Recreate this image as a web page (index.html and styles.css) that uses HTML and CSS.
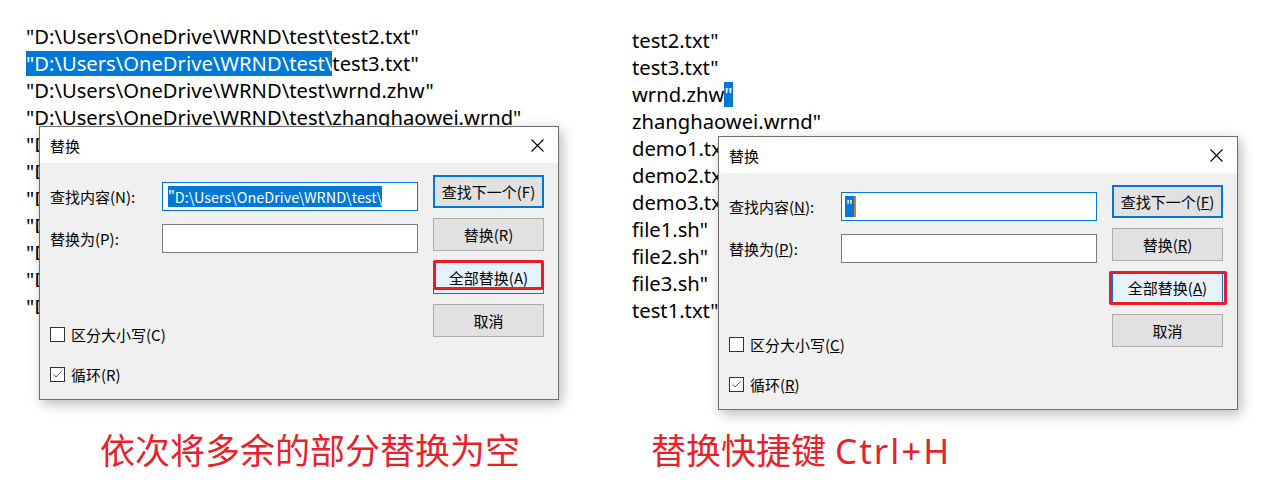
FILE: index.html
```html
<!DOCTYPE html>
<html lang="zh-CN">
<head>
<meta charset="utf-8">
<title>替换</title>
<link rel="stylesheet" href="styles.css">
</head>
<body>
<div class="page">
  <div class="shots">
    <section class="shot shot-a">
      <div class="lines">
        <div class="line">"D:\Users\OneDrive\WRND\test\test2.txt"</div>
        <div class="line"><span class="sel">"D:\Users\OneDrive\WRND\test\</span>test3.txt"</div>
        <div class="line">"D:\Users\OneDrive\WRND\test\wrnd.zhw"</div>
        <div class="line">"D:\Users\OneDrive\WRND\test\zhanghaowei.wrnd"</div>
        <div class="line">"D:\Users\OneDrive\WRND\test\demo1.txt"</div>
        <div class="line">"D:\Users\OneDrive\WRND\test\demo2.txt"</div>
        <div class="line">"D:\Users\OneDrive\WRND\test\demo3.txt"</div>
        <div class="line">"D:\Users\OneDrive\WRND\test\file1.sh"</div>
        <div class="line">"D:\Users\OneDrive\WRND\test\file2.sh"</div>
        <div class="line">"D:\Users\OneDrive\WRND\test\file3.sh"</div>
        <div class="line">"D:\Users\OneDrive\WRND\test\test1.txt"</div>
      </div>
      <div class="dialog dialog-a">
        <div class="titlebar">
          <span class="title">替换</span>
          <svg class="close" width="13" height="13" viewBox="0 0 13 13"><path d="M0.5 0.5L12.5 12.5M12.5 0.5L0.5 12.5" stroke="#000" stroke-width="1.1" fill="none"/></svg>
        </div>
        <div class="body">
          <div class="form">
            <div class="fields">
              <label class="label">查找内容(N):</label>
              <div class="field focus"><span class="sel">"D:\Users\OneDrive\WRND\test\</span></div>
              <label class="label">替换为(P):</label>
              <div class="field"></div>
            </div>
            <div class="checks">
              <div class="check"><span class="box"></span><span>区分大小写(C)</span></div>
              <div class="check"><span class="box"><svg width="13" height="13" viewBox="0 0 13 13"><path d="M2.5 6.5L5 9L10.5 3.5" stroke="#555" stroke-width="1" fill="none"/></svg></span><span>循环(R)</span></div>
            </div>
          </div>
          <div class="buttons">
            <div class="btn default">查找下一个(F)</div>
            <div class="btn">替换(R)</div>
            <div class="btn hover">全部替换(A)<span class="mark mark-a"></span></div>
            <div class="btn">取消</div>
          </div>
        </div>
      </div>
    </section>
    <section class="shot shot-b">
      <div class="lines">
        <div class="line">test2.txt"</div>
        <div class="line">test3.txt"</div>
        <div class="line">wrnd.zhw<span class="sel">"</span></div>
        <div class="line">zhanghaowei.wrnd"</div>
        <div class="line">demo1.txt"</div>
        <div class="line">demo2.txt"</div>
        <div class="line">demo3.txt"</div>
        <div class="line">file1.sh"</div>
        <div class="line">file2.sh"</div>
        <div class="line">file3.sh"</div>
        <div class="line">test1.txt"</div>
      </div>
      <div class="dialog dialog-b">
        <div class="titlebar">
          <span class="title">替换</span>
          <svg class="close" width="13" height="13" viewBox="0 0 13 13"><path d="M0.5 0.5L12.5 12.5M12.5 0.5L0.5 12.5" stroke="#000" stroke-width="1.1" fill="none"/></svg>
        </div>
        <div class="body">
          <div class="form">
            <div class="fields">
              <label class="label">查找内容(<u>N</u>):</label>
              <div class="field focus"><span class="sel sel-small">"</span><span class="caret"></span></div>
              <label class="label">替换为(<u>P</u>):</label>
              <div class="field"></div>
            </div>
            <div class="checks">
              <div class="check"><span class="box"></span><span>区分大小写(<u>C</u>)</span></div>
              <div class="check"><span class="box"><svg width="13" height="13" viewBox="0 0 13 13"><path d="M2.5 6.5L5 9L10.5 3.5" stroke="#555" stroke-width="1" fill="none"/></svg></span><span>循环(<u>R</u>)</span></div>
            </div>
          </div>
          <div class="buttons">
            <div class="btn default">查找下一个(<u>F</u>)</div>
            <div class="btn">替换(<u>R</u>)</div>
            <div class="btn hover">全部替换(<u>A</u>)<span class="mark mark-b"></span></div>
            <div class="btn">取消</div>
          </div>
        </div>
      </div>
    </section>
  </div>
  <div class="captions">
    <p class="caption caption-a">依次将多余的部分替换为空</p>
    <p class="caption caption-b">替换快捷键 <span class="latin">Ctrl+H</span></p>
  </div>
</div>
</body>
</html>
```

FILE: styles.css
```css
body {
  margin: 0;
  background: #fff;
}

.page {
  width: 1284px;
  height: 497px;
  overflow: hidden;
}

.shots {
  display: flex;
  height: 430px;
}

.shot {
  position: relative;
  box-sizing: border-box;
}

.shot-a {
  width: 606px;
  padding: 23px 0 0 26px;
}

.shot-b {
  flex: 1;
  padding: 27px 0 0 26px;
}

.lines {
  font-family: "Noto Sans", "Noto Sans CJK SC", sans-serif;
  font-size: 20.2px;
  line-height: 27px;
  color: #000;
}

.line {
  white-space: pre;
  height: 27px;
}

.sel {
  background: #0078d7;
  color: #fff;
}

.line .sel {
  display: inline-block;
  line-height: 25px;
}

.dialog {
  position: absolute;
  width: 520px;
  height: 274px;
  box-sizing: border-box;
  border: 1px solid #6e6e6e;
  background: #f0f0f0;
  box-shadow: 3px 4px 12px rgba(0, 0, 0, 0.28);
  font-family: "Noto Sans CJK SC", sans-serif;
  font-size: 15px;
  color: #000;
  display: flex;
  flex-direction: column;
}

.dialog-a {
  left: 39px;
  top: 126px;
}

.dialog-b {
  left: 112px;
  top: 136px;
}

.titlebar {
  height: 36px;
  flex: none;
  background: #fff;
  display: flex;
  align-items: center;
  justify-content: space-between;
  padding: 0 14px 0 10px;
}

.close {
  display: block;
}

.body {
  flex: 1;
  display: flex;
  padding-right: 14px;
}

.form {
  flex: 1;
  padding: 19px 0 0 10px;
  display: flex;
  flex-direction: column;
}

.fields {
  display: grid;
  grid-template-columns: 112px 256px;
  row-gap: 13px;
  align-items: center;
}

.label {
  white-space: nowrap;
}

.field {
  height: 29px;
  box-sizing: border-box;
  border: 1px solid #7a7a7a;
  background: #fff;
  display: flex;
  align-items: center;
  padding-left: 5px;
  overflow: hidden;
  white-space: pre;
}

.field.focus {
  border-color: #0078d7;
}

.field .sel {
  font-size: 14.4px;
  line-height: 21px;
}

.field .sel-small {
  padding: 0 1px;
  margin-left: -2px;
}

.caret {
  width: 2px;
  height: 21px;
  background: #d9782a;
}

.checks {
  margin-top: 71px;
  display: flex;
  flex-direction: column;
  gap: 20px;
}

.check {
  display: flex;
  align-items: center;
  gap: 6px;
  height: 20px;
  white-space: nowrap;
}

.box {
  width: 15px;
  height: 15px;
  flex: none;
  box-sizing: border-box;
  border: 1px solid #333;
  background: #fff;
  display: flex;
}

.buttons {
  width: 111px;
  padding-top: 12px;
  display: flex;
  flex-direction: column;
  gap: 10px;
}

.btn {
  position: relative;
  height: 33px;
  box-sizing: border-box;
  border: 1px solid #adadad;
  background: #e1e1e1;
  display: flex;
  align-items: center;
  justify-content: center;
  white-space: nowrap;
}

.btn.default {
  border: 2px solid #0078d7;
}

.btn.hover {
  background: #e5f1fb;
  border-color: #0078d7;
}

.mark {
  position: absolute;
  border: 3px solid #ec1c24;
  border-radius: 2px;
}

.mark-a {
  top: -2px;
  left: -1px;
  right: -1px;
  bottom: 3px;
}

.mark-b {
  top: -1px;
  left: -4px;
  right: -5px;
  bottom: -2px;
}

.captions {
  display: flex;
}

.caption {
  margin: 0;
  font-family: "Noto Sans", "Noto Sans CJK SC", sans-serif;
  font-size: 35px;
  line-height: 42px;
  color: #e8222b;
  white-space: nowrap;
}

.caption-a {
  width: 651px;
  box-sizing: border-box;
  padding-left: 100px;
}

.latin {
  letter-spacing: 2px;
}
```
